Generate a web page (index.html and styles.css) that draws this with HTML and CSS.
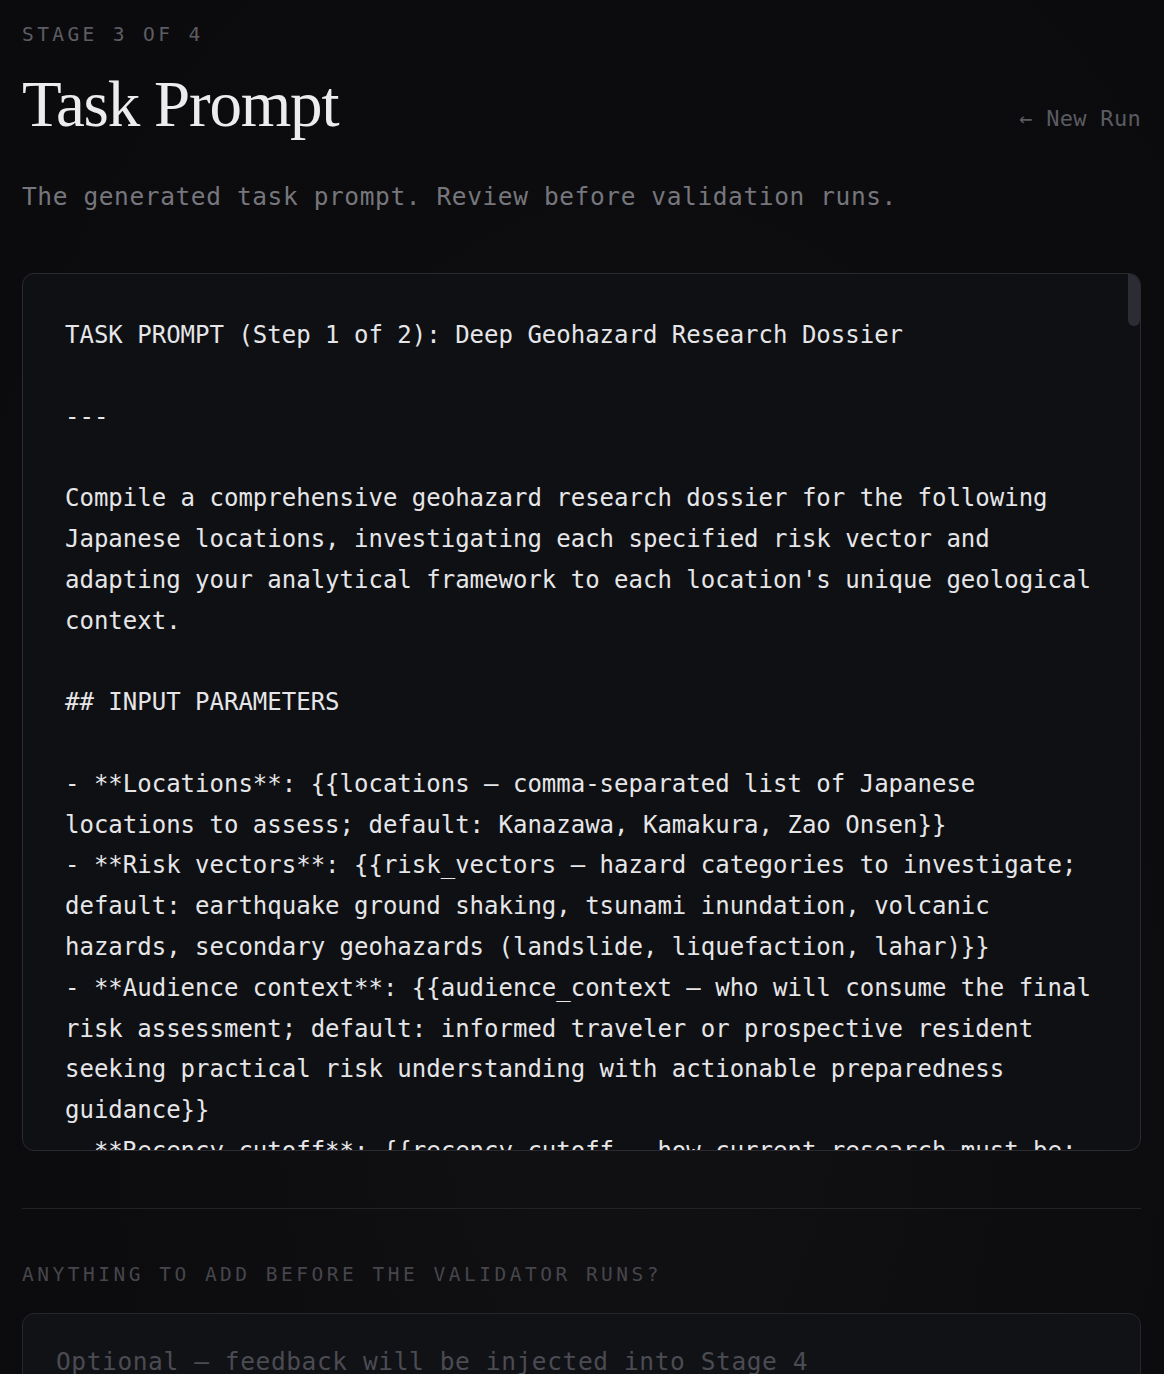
FILE: index.html
```html
<!DOCTYPE html>
<html lang="en">
<head>
  <meta charset="UTF-8" />
  <title>Task Prompt - Stage 3 of 4</title>
  <link rel="stylesheet" href="styles.css">
</head>
<body>
  <div class="page">
    <div class="stage">Stage 3 of 4</div>

    <div class="head">
      <h1>Task Prompt</h1>
      <a class="back" href="#">&larr; New Run</a>
    </div>

    <p class="lede">The generated task prompt. Review before validation runs.</p>

    <div class="prompt-box">
      <pre class="prompt">TASK PROMPT (Step 1 of 2): Deep Geohazard Research Dossier

---

Compile a comprehensive geohazard research dossier for the following Japanese locations, investigating each specified risk vector and adapting your analytical framework to each location's unique geological context.

## INPUT PARAMETERS

- **Locations**: {{locations — comma-separated list of Japanese locations to assess; default: Kanazawa, Kamakura, Zao Onsen}}
- **Risk vectors**: {{risk_vectors — hazard categories to investigate; default: earthquake ground shaking, tsunami inundation, volcanic hazards, secondary geohazards (landslide, liquefaction, lahar)}}
- **Audience context**: {{audience_context — who will consume the final risk assessment; default: informed traveler or prospective resident seeking practical risk understanding with actionable preparedness guidance}}
- **Recency cutoff**: {{recency_cutoff — how current research must be;</pre>
      <div class="thumb"></div>
    </div>

    <hr class="rule" />

    <label class="stage note-label" for="notes">Anything to add before the validator runs?</label>
    <textarea id="notes" class="notes" placeholder="Optional — feedback will be injected into Stage 4"></textarea>
  </div>
</body>
</html>
```

FILE: styles.css
```css
html, body { margin: 0; padding: 0; }
body {
  background: radial-gradient(ellipse at 55% 75%, #111114 0%, #0c0c0e 60%, #0b0b0d 100%);
  color: #e4e4e7;
  font-family: "DejaVu Sans Mono", "Liberation Mono", monospace;
  min-height: 1374px;
}
.page { padding: 20px 23px 0 22px; }

.stage {
  display: block;
  font-size: 19.5px;
  line-height: 29px;
  letter-spacing: 3.4px;
  text-transform: uppercase;
  color: #5d5d64;
}

.head { display: flex; justify-content: space-between; align-items: baseline; margin-top: 19px; }
h1 {
  margin: 0;
  font-family: "Liberation Serif", serif;
  font-weight: 400;
  font-size: 65px;
  line-height: 73px;
  letter-spacing: -1.2px;
  color: #ececef;
}
.back { color: #5b5b62; font-size: 22px; text-decoration: none; letter-spacing: 0.3px; }

.lede { margin: 37px 0 0; font-size: 24.5px; line-height: 38px; letter-spacing: 0.6px; color: #76767d; }

.prompt-box {
  position: relative;
  margin-top: 57px;
  height: 878px;
  box-sizing: border-box;
  border: 1px solid #2a2a30;
  border-radius: 12px;
  background: #0f1013;
  overflow: hidden;
}
.prompt {
  margin: 0;
  padding: 41px 42px;
  font-family: inherit;
  font-size: 24px;
  line-height: 40.8px;
  color: #e6e6e9;
  white-space: pre-wrap;
}
.thumb {
  position: absolute;
  top: 0;
  right: 0;
  width: 12px;
  height: 52px;
  background: #2c2c35;
  border-radius: 0 10px 6px 6px;
}

.rule { border: 0; border-top: 1px solid #222227; margin: 57px 0 0; }

.note-label { margin-top: 51px; letter-spacing: 3.5px; color: #46464c; }

.notes {
  display: block;
  width: 100%;
  box-sizing: border-box;
  margin-top: 24px;
  height: 120px;
  padding: 30px 33px;
  background: #111216;
  border: 1px solid #26272c;
  border-radius: 12px;
  font-family: inherit;
  font-size: 24.5px;
  line-height: 36px;
  letter-spacing: 0.6px;
  color: #e4e4e7;
  resize: none;
}
.notes::placeholder { color: #4b4b53; }
```
